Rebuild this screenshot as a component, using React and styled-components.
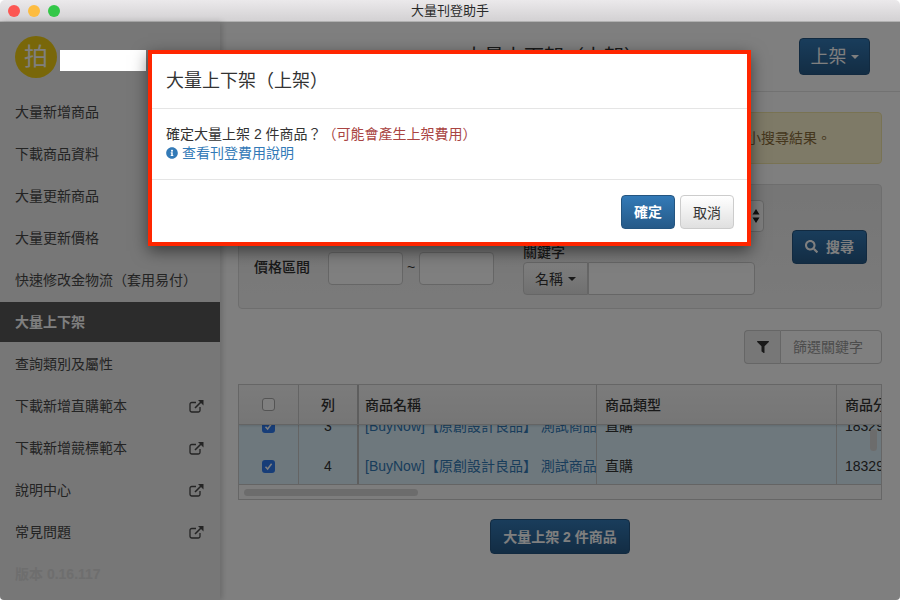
import React from "react";
import styled, { createGlobalStyle } from "styled-components";
import { FaInfoCircle, FaSearch, FaFilter } from "react-icons/fa";

const GlobalStyle = createGlobalStyle`
  html, body {
    margin: 0;
    height: 600px;
    overflow: hidden;
    background: #fff;
  }
  * {
    box-sizing: border-box;
  }
  body {
    font-family: "Liberation Sans", "Noto Sans CJK TC", sans-serif;
    font-size: 14px;
    line-height: 20px;
    color: #333;
  }
`;

const Window = styled.div`
  position: relative;
  width: 900px;
  height: 600px;
  display: flex;
  flex-direction: column;
  border-radius: 5px 5px 4px 4px;
  overflow: hidden;
`;

const TitleBar = styled.div`
  height: 22px;
  flex: none;
  position: relative;
  display: flex;
  align-items: center;
  justify-content: center;
  background: linear-gradient(#ebe9eb, #d3d1d3);
  border-bottom: 1px solid #b1b1b1;
  font-size: 13px;
  color: #2a2a2a;
`;

const Lights = styled.div`
  position: absolute;
  left: 8px;
  top: 5px;
  display: flex;
  gap: 8px;
`;

const Light = styled.span`
  width: 12px;
  height: 12px;
  border-radius: 50%;
  background: ${({ color }) => color};
`;

const Body = styled.div`
  flex: 1;
  display: flex;
  min-height: 0;
`;

const Sidebar = styled.nav`
  width: 220px;
  flex: none;
  background: #eeeeee;
  box-shadow: 2px 0 6px rgba(0, 0, 0, 0.18);
  position: relative;
  display: flex;
  flex-direction: column;
`;

const Brand = styled.div`
  height: 69px;
  padding: 14px 0 0 15px;
  display: flex;
  align-items: flex-start;
`;

const Avatar = styled.div`
  width: 42px;
  height: 42px;
  border-radius: 50%;
  background: #f2cf12;
  color: #fff;
  font-size: 24px;
  display: flex;
  align-items: center;
  justify-content: center;
`;

const NavList = styled.div`
  display: flex;
  flex-direction: column;
  gap: 2px;
  margin-top: 1px;
`;

const NavItem = styled.div`
  height: 40px;
  padding: 0 16px 0 15px;
  display: flex;
  align-items: center;
  justify-content: space-between;
  background: ${({ active }) => (active ? "#585858" : "transparent")};
  color: ${({ active }) => (active ? "#fff" : "#484848")};
  font-weight: ${({ active }) => (active ? 700 : 400)};
`;

const Version = styled(NavItem)`
  color: #dcdcdc;
  font-weight: 700;
`;

const Main = styled.main`
  flex: 1;
  min-width: 0;
  background: #fff;
  padding: 0 18px;
  display: flex;
  flex-direction: column;
`;

const PageHeader = styled.header`
  display: grid;
  grid-template-columns: 1fr auto 1fr;
  align-items: center;
  padding: 16px 30px 16px 18px;
  margin: 0 -18px;
  border-bottom: 1px solid #e4e4e4;
`;

const PageTitle = styled.h1`
  margin: 0;
  grid-column: 2;
  font-size: 20px;
  font-weight: 400;
  line-height: 24px;
`;

const Button = styled.button`
  font-family: inherit;
  font-size: ${({ large }) => (large ? 18 : 14)}px;
  font-weight: ${({ large }) => (large ? 400 : 700)};
  line-height: 20px;
  height: ${({ large }) => (large ? 37 : 34)}px;
  padding: 0;
  white-space: nowrap;
  color: #fff;
  border: 1px solid #245580;
  border-radius: 4px;
  background: linear-gradient(#337ab7, #265a88);
  display: inline-flex;
  align-items: center;
  justify-content: center;
  gap: 2px;
`;

const HeaderButton = styled(Button)`
  justify-self: end;
  width: 71px;
`;

const Caret = styled.span`
  display: inline-block;
  width: 0;
  height: 0;
  margin-left: 2px;
  border-top: 4px solid currentColor;
  border-left: 4px solid transparent;
  border-right: 4px solid transparent;
`;

const Alert = styled.div`
  margin-top: 20px;
  height: 52px;
  padding-right: 50px;
  display: flex;
  align-items: center;
  justify-content: flex-end;
  background: #fdf5cf;
  border: 1px solid #f3e6a6;
  border-radius: 4px;
  color: #8a6d3b;
`;

const SearchPanel = styled.section`
  margin-top: 20px;
  height: 125px;
  padding: 15px 14px 0 15px;
  display: flex;
  background: linear-gradient(#ececec, #f5f5f5);
  border: 1px solid #dcdcdc;
  border-radius: 4px;
`;

const FormColumn = styled.div`
  display: flex;
  flex-direction: column;
  gap: ${({ gap }) => gap}px;
  width: ${({ width }) => width}px;
`;

const PriceRow = styled.div`
  display: flex;
  align-items: center;
  height: 33px;
`;

const FieldLabel = styled.label`
  width: 74px;
  flex: none;
  font-weight: 500;
  padding-bottom: 4px;
`;

const TextBox = styled.div`
  width: ${({ width }) => width}px;
  height: ${({ height }) => height || 33}px;
  flex: ${({ width }) => (width ? "none" : 1)};
  background: #fff;
  border: 1px solid #ccc;
  border-radius: ${({ radius }) => radius || "4px"};
`;

const Tilde = styled.span`
  width: 16px;
  text-align: center;
  padding-bottom: 4px;
`;

const SelectBox = styled(TextBox)`
  display: flex;
  align-items: center;
  justify-content: flex-end;
  padding-right: 3px;
  color: #222;
`;

const KeywordLabel = styled.div`
  font-weight: 500;
  line-height: 14px;
  margin-bottom: 3px;
`;

const KeywordGroup = styled.div`
  display: flex;
  width: 232px;
`;

const DropButton = styled.div`
  width: 65px;
  height: 33px;
  flex: none;
  display: flex;
  align-items: center;
  justify-content: center;
  gap: 3px;
  background: linear-gradient(#fff, #e0e0e0);
  border: 1px solid #ccc;
  border-radius: 4px 0 0 4px;
`;

const SearchButton = styled(Button)`
  align-self: center;
  width: 75px;
  margin: 0 0 15px 28px;
  gap: 8px;
`;

const FilterRow = styled.div`
  margin-top: 21px;
  display: flex;
  justify-content: flex-end;
`;

const FilterAddon = styled.div`
  width: 36px;
  height: 34px;
  display: flex;
  align-items: center;
  justify-content: center;
  background: #eeeeee;
  border: 1px solid #ccc;
  border-right: 0;
  border-radius: 4px 0 0 4px;
`;

const FilterInput = styled.div`
  width: 102px;
  height: 34px;
  padding-left: 12px;
  display: flex;
  align-items: center;
  background: #fff;
  border: 1px solid #ccc;
  border-radius: 0 4px 4px 0;
  color: #999;
`;

const TableFrame = styled.div`
  position: relative;
  margin-top: 20px;
  height: 116px;
  border: 1px solid #ccc;
  overflow: hidden;
  display: flex;
  flex-direction: column;
`;

const COLUMNS = "60px 60px 238px 240px 140px";

const HeadRow = styled.div`
  display: grid;
  grid-template-columns: ${COLUMNS};
  height: 40px;
  flex: none;
  position: relative;
  z-index: 1;
  background: linear-gradient(#f7f7f7, #ececec);
  border-bottom: 1px solid #c8c8c8;
  box-shadow: 0 1px 2px rgba(0, 0, 0, 0.12);
  font-weight: 500;
`;

const RowsViewport = styled.div`
  height: 59px;
  flex: none;
  overflow: hidden;
  display: flex;
  flex-direction: column;
  justify-content: flex-end;
`;

const DataRow = styled.div`
  display: grid;
  grid-template-columns: ${COLUMNS};
  height: 40px;
  flex: none;
  margin-bottom: ${({ last }) => (last ? "-2px" : 0)};
  background: #dcf0fb;
`;

const Cell = styled.div`
  display: flex;
  align-items: center;
  justify-content: ${({ center }) => (center ? "center" : "flex-start")};
  padding-left: ${({ center, name }) => (center ? 0 : name ? 6 : 8)}px;
  border-right: ${({ thick }) => (thick ? "2px solid #bdbdbd" : "1px solid #c8c8c8")};
  white-space: nowrap;
  overflow: hidden;
  color: ${({ link }) => (link ? "#337ab7" : "inherit")};
`;

const Check = styled.span`
  width: 13px;
  height: 13px;
  flex: none;
  display: flex;
  align-items: center;
  justify-content: center;
  border-radius: 3px;
  background: ${({ checked }) => (checked ? "#2f7bf0" : "#fff")};
  border: ${({ checked }) => (checked ? "none" : "1px solid #a8a8a8")};
`;

const ScrollTrack = styled.div`
  flex: 1;
  padding: 4px 0 0 5px;
  background: #fafafa;
  border-top: 1px solid #c8c8c8;
`;

const ScrollThumb = styled.div`
  width: 174px;
  height: 7px;
  border-radius: 4px;
  background: #d8d8d8;
`;

const VerticalThumb = styled.div`
  position: absolute;
  right: 4px;
  top: 44px;
  width: 7px;
  height: 22px;
  border-radius: 4px;
  background: #d8d8d8;
  z-index: 2;
`;

const BottomAction = styled.div`
  margin-top: 19px;
  display: flex;
  justify-content: center;
`;

const BottomButton = styled(Button)`
  width: 140px;
  height: 35px;
`;

const Backdrop = styled.div`
  position: absolute;
  z-index: 10;
  left: 0;
  right: 0;
  top: 22px;
  bottom: 0;
  background: rgba(0, 0, 0, 0.5);
  padding: 28px 0 0 148px;
`;

const NameMask = styled.div`
  position: absolute;
  left: 60px;
  top: 28px;
  width: 86px;
  height: 21px;
  background: #fff;
`;

const Modal = styled.div`
  position: relative;
  width: 603px;
  height: 196px;
  background: #fff;
  border: 4px solid #ff2600;
  box-shadow: 0 5px 15px rgba(0, 0, 0, 0.5);
  display: flex;
  flex-direction: column;
`;

const ModalHeader = styled.div`
  height: 55px;
  padding: 0 14px;
  display: flex;
  align-items: center;
  border-bottom: 1px solid #e5e5e5;
`;

const ModalTitle = styled.h4`
  margin: 0;
  font-size: 18px;
  font-weight: 400;
  line-height: 20px;
`;

const ModalBody = styled.div`
  height: 71px;
  padding: 15px 14px;
  border-bottom: 1px solid #e5e5e5;
`;

const Warn = styled.span`
  color: #a94442;
  margin-left: -3px;
`;

const HelpLink = styled.a`
  display: flex;
  align-items: center;
  gap: 4px;
  margin-top: -1px;
  color: #337ab7;
`;

const ModalFooter = styled.div`
  flex: 1;
  padding: 2px 13px 0 0;
  display: flex;
  align-items: center;
  justify-content: flex-end;
  gap: 5px;
`;

const OkButton = styled(Button)`
  width: 54px;
`;

const CancelButton = styled.button`
  width: 54px;
  height: 34px;
  padding: 0;
  font-family: inherit;
  font-size: 14px;
  color: #333;
  border: 1px solid #ccc;
  border-radius: 4px;
  background: linear-gradient(#fff, #e0e0e0);
`;

const ExternalIcon = () => (
  <svg width="15" height="14" viewBox="0 0 15 14" fill="none">
    <path
      d="M11 8v3.2A1.8 1.8 0 0 1 9.2 13H2.8A1.8 1.8 0 0 1 1 11.2V5.3a1.8 1.8 0 0 1 1.8-1.8H7"
      stroke="#484848"
      strokeWidth="1.3"
    />
    <path d="M6 9l6-6" stroke="#484848" strokeWidth="1.6" />
    <path d="M9 1h5.5v5.5z" fill="#484848" />
  </svg>
);

const CheckMark = () => (
  <svg width="9" height="9" viewBox="0 0 9 9" fill="none">
    <path d="M1.5 4.8L3.6 7 7.6 1.8" stroke="#fff" strokeWidth="1.5" />
  </svg>
);

const Stepper = () => (
  <svg width="8" height="16" viewBox="0 0 8 16">
    <path d="M4 1l3.5 5.5h-7zM4 15L.5 9.5h7z" fill="#222" />
  </svg>
);

const navItems = [
  { label: "大量新增商品" },
  { label: "下載商品資料" },
  { label: "大量更新商品" },
  { label: "大量更新價格" },
  { label: "快速修改金物流（套用易付）" },
  { label: "大量上下架", active: true },
  { label: "查詢類別及屬性" },
  { label: "下載新增直購範本", external: true },
  { label: "下載新增競標範本", external: true },
  { label: "說明中心", external: true },
  { label: "常見問題", external: true },
];

const rows = [3, 4];

export default function App() {
  return (
    <Window>
      <GlobalStyle />
      <TitleBar>
        <Lights>
          <Light color="#fc5753" />
          <Light color="#fdbc40" />
          <Light color="#33c748" />
        </Lights>
        大量刊登助手
      </TitleBar>
      <Body>
        <Sidebar>
          <Brand>
            <Avatar>拍</Avatar>
          </Brand>
          <NavList>
            {navItems.map((item) => (
              <NavItem key={item.label} active={item.active}>
                {item.label}
                {item.external && <ExternalIcon />}
              </NavItem>
            ))}
            <Version>版本 0.16.117</Version>
          </NavList>
        </Sidebar>
        <Main>
          <PageHeader>
            <PageTitle>大量上下架（上架）</PageTitle>
            <HeaderButton large>
              上架
              <Caret />
            </HeaderButton>
          </PageHeader>
          <Alert>若商品數量過多，請縮小搜尋結果。</Alert>
          <SearchPanel>
            <FormColumn gap={19} width={269}>
              <PriceRow>
                <FieldLabel>商品狀態</FieldLabel>
                <TextBox width={166} height={32} />
              </PriceRow>
              <PriceRow>
                <FieldLabel>價格區間</FieldLabel>
                <TextBox width={75} />
                <Tilde>~</Tilde>
                <TextBox width={75} />
              </PriceRow>
            </FormColumn>
            <FormColumn gap={13} width={241}>
              <SelectBox width={241} height={32}>
                <Stepper />
              </SelectBox>
              <div>
                <KeywordLabel>關鍵字</KeywordLabel>
                <KeywordGroup>
                  <DropButton>
                    名稱
                    <Caret />
                  </DropButton>
                  <TextBox radius="0 4px 4px 0" />
                </KeywordGroup>
              </div>
            </FormColumn>
            <SearchButton>
              <FaSearch size={13} />
              搜尋
            </SearchButton>
          </SearchPanel>
          <FilterRow>
            <FilterAddon>
              <FaFilter size={12} color="#333" />
            </FilterAddon>
            <FilterInput>篩選關鍵字</FilterInput>
          </FilterRow>
          <TableFrame>
            <HeadRow>
              <Cell center>
                <Check />
              </Cell>
              <Cell center thick>
                列
              </Cell>
              <Cell name="true">商品名稱</Cell>
              <Cell>商品類型</Cell>
              <Cell>商品分類</Cell>
            </HeadRow>
            <RowsViewport>
              {rows.map((row) => (
                <DataRow key={row} last={row === 4}>
                  <Cell center>
                    <Check checked>
                      <CheckMark />
                    </Check>
                  </Cell>
                  <Cell center thick>
                    {row}
                  </Cell>
                  <Cell link name="true">
                    [BuyNow]【原創設計良品】 測試商品
                  </Cell>
                  <Cell>直購</Cell>
                  <Cell>18329</Cell>
                </DataRow>
              ))}
            </RowsViewport>
            <ScrollTrack>
              <ScrollThumb />
            </ScrollTrack>
            <VerticalThumb />
          </TableFrame>
          <BottomAction>
            <BottomButton>大量上架 2 件商品</BottomButton>
          </BottomAction>
        </Main>
      </Body>
      <Backdrop>
        <NameMask />
        <Modal>
          <ModalHeader>
            <ModalTitle>大量上下架（上架）</ModalTitle>
          </ModalHeader>
          <ModalBody>
            <div>
              確定大量上架 2 件商品？ <Warn>（可能會產生上架費用）</Warn>
            </div>
            <HelpLink>
              <FaInfoCircle size={12} />
              查看刊登費用說明
            </HelpLink>
          </ModalBody>
          <ModalFooter>
            <OkButton>確定</OkButton>
            <CancelButton>取消</CancelButton>
          </ModalFooter>
        </Modal>
      </Backdrop>
    </Window>
  );
}
